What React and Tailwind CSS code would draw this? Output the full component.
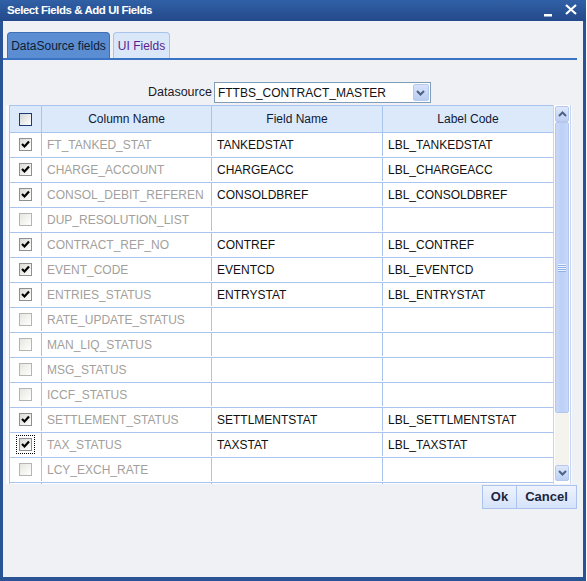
import React from "react";

const rows = [
  { c: "FT_TANKED_STAT", on: true, f: "TANKEDSTAT", l: "LBL_TANKEDSTAT" },
  { c: "CHARGE_ACCOUNT", on: true, f: "CHARGEACC", l: "LBL_CHARGEACC" },
  { c: "CONSOL_DEBIT_REFEREN", on: true, f: "CONSOLDBREF", l: "LBL_CONSOLDBREF" },
  { c: "DUP_RESOLUTION_LIST", on: false, f: "", l: "" },
  { c: "CONTRACT_REF_NO", on: true, f: "CONTREF", l: "LBL_CONTREF" },
  { c: "EVENT_CODE", on: true, f: "EVENTCD", l: "LBL_EVENTCD" },
  { c: "ENTRIES_STATUS", on: true, f: "ENTRYSTAT", l: "LBL_ENTRYSTAT" },
  { c: "RATE_UPDATE_STATUS", on: false, f: "", l: "" },
  { c: "MAN_LIQ_STATUS", on: false, f: "", l: "" },
  { c: "MSG_STATUS", on: false, f: "", l: "" },
  { c: "ICCF_STATUS", on: false, f: "", l: "" },
  { c: "SETTLEMENT_STATUS", on: true, f: "SETTLMENTSTAT", l: "LBL_SETTLMENTSTAT" },
  { c: "TAX_STATUS", on: true, f: "TAXSTAT", l: "LBL_TAXSTAT", focus: true },
  { c: "LCY_EXCH_RATE", on: false, f: "", l: "" },
  { c: "", on: false, f: "", l: "", hidden: true },
];

function Box({ checked, focus }) {
  return (
    <span
      className={
        focus
          ? "flex items-center justify-center outline outline-1 outline-dotted outline-black outline-offset-[2px]"
          : "flex items-center justify-center"
      }
    >
      <span
        className={
          checked
            ? "flex h-[13px] w-[13px] items-center justify-center border border-[#8e8f8f] bg-gradient-to-br from-[#dcdcd6] to-white"
            : "flex h-[13px] w-[13px] items-center justify-center border border-[#b4b4b0] bg-gradient-to-br from-[#e6e6e0] to-white"
        }
      >
        {checked && (
          <svg width="11" height="11" viewBox="0 0 11 11">
            <polyline points="2,5 4.5,7.5 9,2.5" fill="none" stroke="#000" strokeWidth="2.2" />
          </svg>
        )}
      </span>
    </span>
  );
}

function Chevron({ up }) {
  return (
    <svg width="9" height="6" viewBox="0 0 9 6">
      <polyline
        points={up ? "1,5 4.5,1.5 8,5" : "1,1 4.5,4.5 8,1"}
        fill="none"
        stroke="#4d6185"
        strokeWidth="2"
      />
    </svg>
  );
}

export default function App() {
  return (
    <div
      className="flex h-[581px] w-[587px] bg-white"
      style={{ fontFamily: '"Liberation Sans", Arial, sans-serif' }}
    >
      <div className="flex h-[581px] w-[586px] flex-col border-x-[3px] border-b-[4px] border-[#2a5396] bg-[#f0f1f5]">
        {/* title bar */}
        <div className="-mx-[3px] flex h-[21px] items-center bg-gradient-to-b from-[#3160a6] to-[#23498b] pl-[7px] pr-[9px]">
          <span className="text-[11.5px] font-bold tracking-[-0.45px] text-white">
            Select Fields &amp; Add UI Fields
          </span>
          <span className="flex-1" />
          <svg width="10" height="10" viewBox="0 0 10 10" className="mr-[12px] mt-[2px]">
            <rect x="1" y="7" width="8" height="2.5" fill="#fff" />
          </svg>
          <svg width="12" height="11" viewBox="0 0 12 11" className="mb-[2px]">
            <path d="M1 1 L11 10 M11 1 L1 10" stroke="#fff" strokeWidth="2.2" />
          </svg>
        </div>

        {/* tabs */}
        <div className="mt-[11px] flex h-[26px] items-end gap-[3px] pl-[4px]">
          <div className="flex h-[26px] w-[103px] items-center justify-center rounded-t-[4px] border border-b-0 border-[#3f6fb6] bg-[#5a8dd1] text-[12px] text-[#0e1c36]">
            DataSource fields
          </div>
          <div className="flex h-[26px] w-[57px] items-center justify-center rounded-t-[4px] border border-b-0 border-[#a8c4ec] bg-[#d9e7f9] text-[12px] text-[#5a1e8c]">
            UI Fields
          </div>
        </div>
        <div className="mr-[6px] h-[2px] bg-[#3a72c4]" />

        {/* datasource */}
        <div className="mt-[22px] flex h-[21px] items-end pl-[145px]">
          <span className="mb-[1px] mr-[2px] text-[12.5px] text-[#1a1a2a]">Datasource</span>
          <div className="flex h-[21px] w-[217px] items-center border border-[#7f9db9] bg-white pl-[3px] pr-[1px]">
            <span className="flex-1 text-[12px] text-[#111]">FTTBS_CONTRACT_MASTER</span>
            <span className="flex h-[17px] w-[16px] items-center justify-center rounded-[2px] border border-[#b6c8ee] bg-gradient-to-b from-[#d8e3fb] to-[#b9cdf4]">
              <Chevron />
            </span>
          </div>
        </div>

        {/* table */}
        <div className="ml-[3px] mt-[2px] flex h-[379px] w-[566px] overflow-hidden bg-[#fafbfd] pl-[3px] pr-[1px]">
          <div className="flex w-[544px] flex-col border-l border-[#a9c5ef]">
            <div className="flex h-[28px] shrink-0 border-y border-[#a9c5ef] bg-[#dce9fb] text-[12px] text-[#0f1a36]">
              <div className="flex w-[32px] items-center justify-center border-r border-[#a9c5ef]">
                <span className="h-[13px] w-[13px] border border-[#1c3a72] bg-gradient-to-br from-[#d4d6d6] to-white" />
              </div>
              <div className="flex w-[170px] items-center justify-center border-r border-[#a9c5ef]">Column Name</div>
              <div className="flex w-[171px] items-center justify-center border-r border-[#a9c5ef]">Field Name</div>
              <div className="flex w-[170px] items-center justify-center">Label Code</div>
            </div>
            {rows.map((r, i) => (
              <div key={i} className="flex h-[25px] shrink-0 border-b border-[#a9c5ef] bg-white pb-[1px] text-[12px]">
                <div className="flex w-[32px] items-center justify-center border-r border-[#a9c5ef]">
                  {!r.hidden && <Box checked={r.on} focus={r.focus} />}
                </div>
                <div className="flex w-[170px] items-center whitespace-nowrap border-r border-[#a9c5ef] pl-[5px] text-[#a39f9c]">
                  {r.c}
                </div>
                <div className="flex w-[171px] items-center whitespace-nowrap border-r border-[#a9c5ef] pl-[5px] text-[#111]">
                  {r.f}
                </div>
                <div className="flex w-[170px] items-center whitespace-nowrap pl-[5px] text-[#111]">{r.l}</div>
              </div>
            ))}
          </div>

          {/* scrollbar */}
          <div className="flex w-[18px] flex-col border-x border-[#c5d6f3] bg-white px-[1px] pt-[1px] pb-[3px]">
            <div className="flex h-[16px] shrink-0 items-center justify-center rounded-[2px] border border-[#b6c8ee] bg-gradient-to-b from-[#dfe8fc] to-[#bccff4]">
              <Chevron up />
            </div>
            <div className="flex h-[291px] shrink-0 items-center justify-center rounded-[2px] border border-[#b2c6ee] bg-gradient-to-r from-[#c9d8f8] via-[#bcd0f6] to-[#c9d8f8]">
              <svg width="8" height="8" viewBox="0 0 8 8">
                <path d="M0 0.5H8M0 2.5H8M0 4.5H8M0 6.5H8" stroke="#eef3fd" strokeWidth="1" />
                <path d="M0 1.5H8M0 3.5H8M0 5.5H8M0 7.5H8" stroke="#8fb0ea" strokeWidth="1" />
              </svg>
            </div>
            <div className="flex-1 bg-[#f4f3ee]" />
            <div className="flex h-[16px] shrink-0 items-center justify-center rounded-[2px] border border-[#b6c8ee] bg-gradient-to-b from-[#dfe8fc] to-[#bccff4]">
              <Chevron />
            </div>
          </div>
        </div>

        {/* buttons */}
        <div className="mr-[6px] mt-[1px] flex h-[24px] justify-end">
          <button className="flex h-[24px] w-[35px] items-center justify-center border border-[#a9c3ee] bg-gradient-to-b from-[#eef3fd] to-[#d6e3fa] text-[13px] font-bold text-[#1a2540]">
            Ok
          </button>
          <button className="flex h-[24px] w-[60px] items-center justify-center border border-l-0 border-[#a9c3ee] bg-gradient-to-b from-[#eef3fd] to-[#d6e3fa] text-[13px] font-bold text-[#1a2540]">
            Cancel
          </button>
        </div>
        <div className="flex-1" />
      </div>
    </div>
  );
}
